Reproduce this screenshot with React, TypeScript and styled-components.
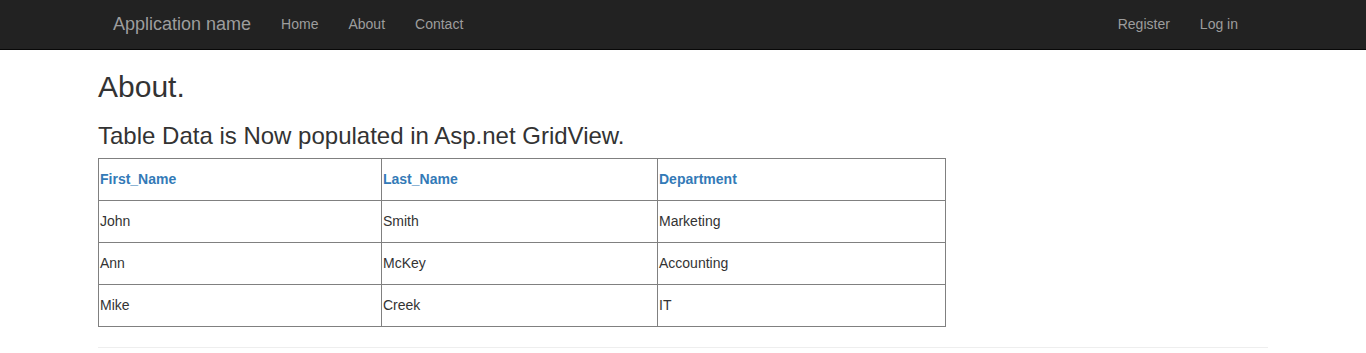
import React from 'react'
import styled, { createGlobalStyle } from 'styled-components'

const GlobalStyle = createGlobalStyle`
  * { box-sizing: border-box; }
  body {
    margin: 0;
    padding-top: 50px;
    font-family: "Liberation Sans", Arial, Helvetica, sans-serif;
    font-size: 14px;
    line-height: 1.42857;
    color: #333;
    background: #fff;
  }
`

const Navbar = styled.nav`
  position: fixed;
  top: 0;
  left: 0;
  right: 0;
  height: 50px;
  background: #222;
  border-bottom: 1px solid #080808;
`

const NavContainer = styled.div`
  width: 1170px;
  margin: 0 auto;
  padding: 0 15px;
  display: flex;
  align-items: center;
  height: 49px;
`

const Brand = styled.a`
  font-size: 18px;
  line-height: 20px;
  padding: 14px 15px 15px;
  margin-left: -15px;
  color: #9d9d9d;
  text-decoration: none;
`

const NavList = styled.ul<{ $right?: boolean }>`
  list-style: none;
  margin: 0;
  margin-left: ${p => (p.$right ? 'auto' : '0')};
  padding: 0;
  display: flex;
`

const NavLink = styled.a`
  display: block;
  padding: 14px 15px 16px;
  line-height: 20px;
  color: #9d9d9d;
  text-decoration: none;
`

const Container = styled.div`
  width: 1170px;
  margin: 0 auto;
`

const Title = styled.h2`
  font-size: 30px;
  font-weight: 500;
  line-height: 1.1;
  margin: 20px 0 10px;
`

const Subtitle = styled.h3`
  font-size: 24px;
  font-weight: 500;
  line-height: 1.1;
  margin: 20px 0 9px;
`

const Grid = styled.table`
  border-collapse: collapse;
  width: 848px;
  border: 1px solid #808080;
`

const HeadCell = styled.th<{ $w: number }>`
  width: ${p => p.$w}px;
  height: 42px;
  padding: 0 1px;
  border: 1px solid #808080;
  text-align: left;
  font-weight: bold;
  color: #337ab7;
`

const Cell = styled.td`
  height: 42px;
  padding: 0 1px;
  border: 1px solid #808080;
  color: #333;
`

const Rule = styled.hr`
  margin: 20px 0;
  border: 0;
  border-top: 1px solid #eee;
`

const rows = [
  ['John', 'Smith', 'Marketing'],
  ['Ann', 'McKey', 'Accounting'],
  ['Mike', 'Creek', 'IT'],
]

export default function App() {
  return (
    <>
      <GlobalStyle />
      <Navbar>
        <NavContainer>
          <Brand href="#">Application name</Brand>
          <NavList>
            <li><NavLink href="#">Home</NavLink></li>
            <li><NavLink href="#">About</NavLink></li>
            <li><NavLink href="#">Contact</NavLink></li>
          </NavList>
          <NavList $right>
            <li><NavLink href="#">Register</NavLink></li>
            <li><NavLink href="#">Log in</NavLink></li>
          </NavList>
        </NavContainer>
      </Navbar>
      <Container>
        <Title>About.</Title>
        <Subtitle>Table Data is Now populated in Asp.net GridView.</Subtitle>
        <Grid>
          <thead>
            <tr>
              <HeadCell $w={283}>First_Name</HeadCell>
              <HeadCell $w={276}>Last_Name</HeadCell>
              <HeadCell $w={288}>Department</HeadCell>
            </tr>
          </thead>
          <tbody>
            {rows.map((r, i) => (
              <tr key={i}>
                {r.map((c, j) => <Cell key={j}>{c}</Cell>)}
              </tr>
            ))}
          </tbody>
        </Grid>
        <Rule />
      </Container>
    </>
  )
}
